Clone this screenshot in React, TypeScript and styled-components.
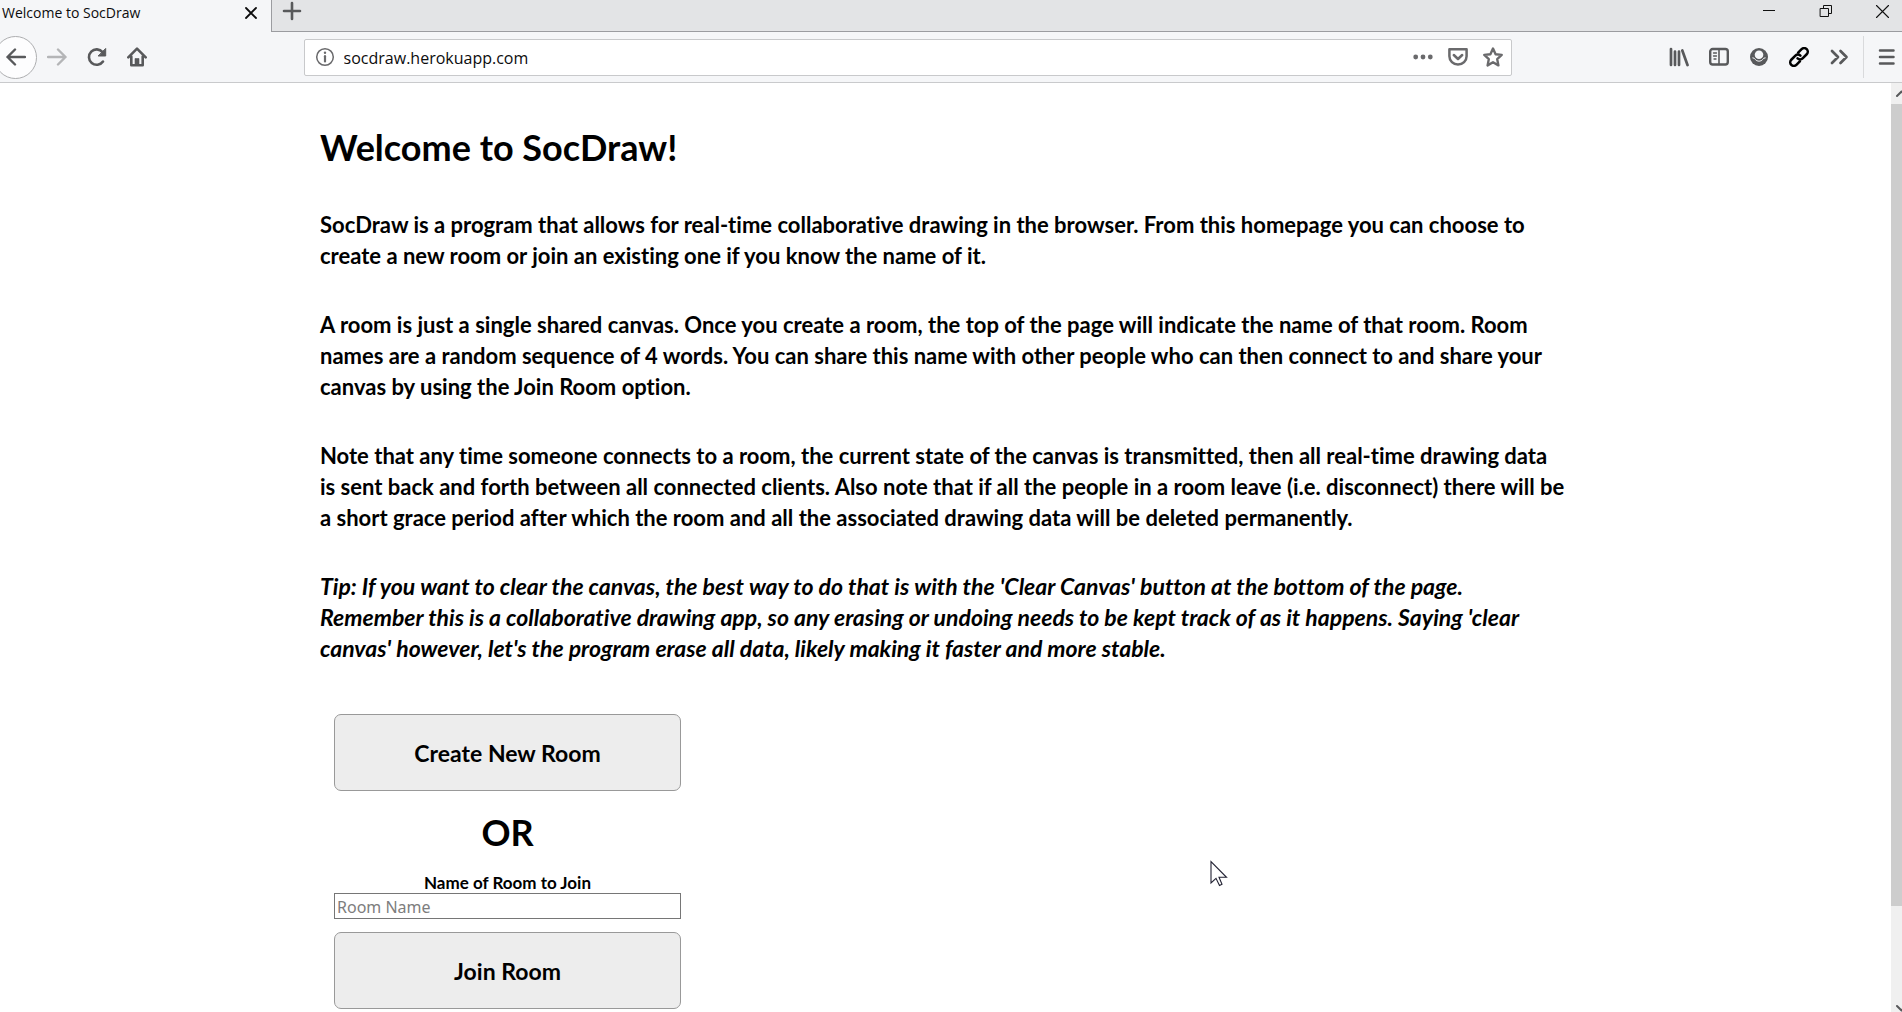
import React from "react";
import styled, { createGlobalStyle } from "styled-components";

const GlobalStyle = createGlobalStyle`
  *, *::before, *::after { box-sizing: border-box; }
  body { margin: 0; background: #fff; color: #000; overflow: hidden; }
`;

const uiFont = `"Open Sans", "Noto Sans", sans-serif`;
const pageFont = `Lato, sans-serif`;

const Window = styled.div`
  display: flex;
  flex-direction: column;
  height: 100vh;
  overflow: hidden;
`;

const TabStrip = styled.header`
  display: flex;
  flex: none;
  height: 32px;
  background: #e3e4e6;
`;

const Tab = styled.div`
  display: flex;
  align-items: center;
  justify-content: space-between;
  width: 271px;
  padding: 0 12px 6px 2px;
  background: #f5f6f8;
  font: 14px/20px ${uiFont};
  color: #0c0c0d;
`;

const StripRest = styled.div`
  display: flex;
  flex: 1;
  justify-content: space-between;
  padding: 0 10px;
  border-left: 1px solid #9b9ca0;
  border-bottom: 1px solid #9b9ca0;
`;

const IconButton = styled.button<{ $w?: number; $h?: number }>`
  display: flex;
  flex: none;
  align-items: center;
  justify-content: center;
  width: ${(p) => p.$w ?? 20}px;
  height: ${(p) => p.$h ?? 22}px;
  padding: 0;
  border: 0;
  background: none;
  color: #58595b;

  svg {
    flex: none;
    display: block;
  }
`;

const WindowControls = styled.div`
  display: flex;
  gap: 36px;
  color: #111;
`;

const Toolbar = styled.nav`
  display: flex;
  flex: none;
  align-items: center;
  height: 51px;
  background: #f5f6f8;
  border-bottom: 1px solid #c9cacc;
`;

const NavGroup = styled.div`
  display: flex;
  align-items: center;
  width: 155px;
  gap: 20px;
`;

const BackButton = styled(IconButton)`
  width: 43px;
  height: 43px;
  margin: 0 -10px 0 -6px;
  border: 1px solid #adaeb0;
  border-radius: 50%;
  background: #fdfdfe;
`;

const Spacer = styled.div`
  flex: 1;
`;

const AddressBar = styled.div`
  display: flex;
  flex: 8;
  align-items: center;
  height: 37px;
  padding: 0 8px 0 10px;
  border: 1px solid #c8c9cb;
  border-radius: 2px;
  background: #fff;
`;

const AddressInput = styled.input`
  flex: 1;
  min-width: 0;
  margin-left: 7px;
  padding: 2px 2px 0;
  border: 0;
  outline: 0;
  background: none;
  color: #0c0c0d;
  font: 16px/24px ${uiFont};
`;

const AddressActions = styled.div`
  display: flex;
  gap: 15px;
`;

const ToolGroup = styled.div`
  display: flex;
  align-items: center;
  gap: 20px;
  width: 202px;
  padding-left: 8px;
`;

const MenuGroup = styled.div`
  display: flex;
  align-items: center;
  justify-content: center;
  width: 39px;
  height: 42px;
  padding-left: 8px;
  border-left: 1px solid #d9dadc;
`;

const Viewport = styled.div`
  display: flex;
  flex: 1;
  min-height: 0;
`;

const Page = styled.main`
  flex: 1;
  min-width: 0;
  padding: 38px 320px 0;
  overflow: hidden;
  font-family: ${pageFont};
  font-weight: 700;
  font-variant-ligatures: none;
`;

const Title = styled.h1`
  margin: 0 0 36px;
  font-size: 36px;
  line-height: 52px;
`;

const Paragraph = styled.p<{ $tip?: boolean }>`
  margin: 0 0 38px;
  font-size: ${(p) => (p.$tip ? 23 : 22)}px;
  line-height: 31px;
  font-style: ${(p) => (p.$tip ? "italic" : "normal")};
  white-space: nowrap;
`;

const RoomForm = styled.form`
  display: flex;
  flex-direction: column;
  width: 347px;
  margin: 50px 14px 0;
`;

const RoomButton = styled.button`
  height: 77px;
  padding: 0;
  border: 1px solid #999;
  border-radius: 7px;
  background: #ededed;
  color: #000;
  font: 700 23px/36px ${pageFont};
`;

const Or = styled.p`
  margin: 15px 0;
  font-size: 36px;
  line-height: 52px;
  text-align: center;
`;

const RoomLabel = styled.label`
  font-size: 17px;
  line-height: 20px;
  text-align: center;
`;

const RoomInput = styled.input`
  height: 26px;
  margin-bottom: 13px;
  padding: 2px 2px 0;
  border: 1px solid #767676;
  border-radius: 0;
  color: #000;
  font: 16px/22px "Noto Sans", sans-serif;

  &::placeholder {
    color: #7d7d7d;
    opacity: 1;
  }
`;

const ScrollBar = styled.div`
  display: flex;
  flex: none;
  flex-direction: column;
  width: 11px;
  overflow: hidden;
  background: #f0f0f0;
`;

const ScrollArrow = styled(IconButton)`
  width: 21px;
  height: 21px;
`;

const ScrollThumb = styled.div`
  flex: 802;
  background: #cdcdcd;
`;

const ScrollTrack = styled.div`
  flex: 85;
`;

const Pointer = styled.svg`
  position: absolute;
  left: 1210px;
  top: 860px;
`;

type IconProps = { size?: number; color?: string; width?: number; children: React.ReactNode };

const Icon = ({ size = 20, color = "currentColor", width = 2.4, children }: IconProps) => (
  <svg
    width={size}
    height={size}
    viewBox={`0 0 ${size} ${size}`}
    fill="none"
    stroke={color}
    strokeWidth={width}
    strokeLinecap="round"
    strokeLinejoin="round"
    aria-hidden="true"
  >
    {children}
  </svg>
);

export default function App() {
  return (
    <>
      <GlobalStyle />
      <Window>
        <TabStrip>
          <Tab>
            <span>Welcome to SocDraw</span>
            <IconButton aria-label="Close tab" $w={16}>
              <Icon size={16} color="#0c0c0d" width={1.8}>
                <path d="M3 3l10 10M13 3L3 13" />
              </Icon>
            </IconButton>
          </Tab>
          <StripRest>
            <IconButton aria-label="New tab">
              <Icon width={2.6}>
                <path d="M10 2v16M2 10h16" />
              </Icon>
            </IconButton>
            <WindowControls>
              <IconButton aria-label="Minimize">
                <Icon width={1} color="#111">
                  <path d="M3.500 9.500h11" strokeLinecap="square" />
                </Icon>
              </IconButton>
              <IconButton aria-label="Restore">
                <Icon width={1} color="#111">
                  <path d="M4.500 7.500h8v8h-8zM7.500 7.500v-3h8v8h-3" strokeLinejoin="miter" />
                </Icon>
              </IconButton>
              <IconButton aria-label="Close">
                <Icon width={1.1} color="#111">
                  <path d="M4.500 4.500l12 12M16.500 4.500L4.500 16.500" />
                </Icon>
              </IconButton>
            </WindowControls>
          </StripRest>
        </TabStrip>

        <Toolbar>
          <NavGroup>
            <BackButton aria-label="Back">
              <Icon>
                <path d="M19 10H1.500M9 2.500L1.500 10L9 17.500" />
              </Icon>
            </BackButton>
            <IconButton aria-label="Forward">
              <Icon color="#b4b5b7">
                <path d="M1 10h17.500M11 2.500L18.500 10L11 17.500" />
              </Icon>
            </IconButton>
            <IconButton aria-label="Reload">
              <Icon width={2.6}>
                <path d="M16 14.500A7.700 7.700 0 1 1 15.600 5.200" />
                <path d="M18.700 1.800v7.200h-7.200z" fill="currentColor" strokeWidth="1" />
              </Icon>
            </IconButton>
            <IconButton aria-label="Home">
              <Icon width={2.6}>
                <path d="M1.300 10.300L10 1.600L18.700 10.300" />
                <path d="M4.300 9.500v8.700h11.400V9.500" />
                <path d="M8 18v-6.500h4V18z" fill="currentColor" strokeWidth="0.600" />
              </Icon>
            </IconButton>
          </NavGroup>
          <Spacer />
          <AddressBar>
            <IconButton aria-label="Site information">
              <Icon width={1.5} color="#6a6a6c">
                <circle cx="10" cy="10" r="8.300" />
                <path d="M10 9.200v5.200" strokeWidth="2.200" />
                <path d="M10 5.700v.1" strokeWidth="2.400" />
              </Icon>
            </IconButton>
            <AddressInput aria-label="Address" defaultValue="socdraw.herokuapp.com" />
            <AddressActions>
              <IconButton aria-label="Page actions">
                <Icon>
                  <g fill="#6a6a6c" stroke="none">
                    <circle cx="2.700" cy="10" r="2.400" />
                    <circle cx="10" cy="10" r="2.400" />
                    <circle cx="17.300" cy="10" r="2.400" />
                  </g>
                </Icon>
              </IconButton>
              <IconButton aria-label="Save to Pocket">
                <Icon color="#6a6a6c" width={2.5}>
                  <path d="M1.400 2.200h17.200v7a8.600 8.300 0 0 1-17.200 0z" />
                  <path d="M5.800 8L10 12L14.200 8" />
                </Icon>
              </IconButton>
              <IconButton aria-label="Bookmark">
                <Icon color="#6a6a6c" width={2.4}>
                  <path d="M10 1.500l2.600 5.700 6.100.7-4.500 4.200 1.200 6.300L10 15.300l-5.400 3.100 1.200-6.300L1.300 7.900l6.100-.7z" />
                </Icon>
              </IconButton>
            </AddressActions>
          </AddressBar>
          <Spacer />
          <ToolGroup>
            <IconButton aria-label="Library">
              <Icon width={2.7}>
                <path d="M2 2v16M6 4.500V18M10 4.500V18M13.300 3.500L18.500 18" />
              </Icon>
            </IconButton>
            <IconButton aria-label="Sidebar">
              <Icon width={2.4}>
                <rect x="1.200" y="2" width="17.600" height="15.500" rx="2.500" />
                <path d="M10 2.500v15" strokeWidth="1.600" />
                <path d="M4.500 6h3M4.500 9h3M5 12h2" strokeWidth="1.300" />
              </Icon>
            </IconButton>
            <IconButton aria-label="Account">
              <Icon>
                <circle cx="10" cy="10" r="9" fill="currentColor" stroke="none" />
                <circle cx="10" cy="7.800" r="4.300" fill="#f5f6f8" stroke="none" />
                <path d="M3.800 10.800Q5.500 10.800 6.300 12.500Q7.500 14.200 10 14.200T13.700 12.500Q14.500 10.800 16.200 10.800" stroke="#f5f6f8" strokeWidth="1" />
              </Icon>
            </IconButton>
            <IconButton aria-label="Copy link">
              <Icon color="#000" width={2.5}>
                <g transform="rotate(-45 10 10)">
                  <path d="M7.500 13.700H2.600a3.600 3.600 0 0 1 0-7.200H8.400A3.600 3.600 0 0 1 12 10" />
                  <path d="M12.500 6.300H17.400a3.600 3.600 0 0 1 0 7.200H11.600A3.600 3.600 0 0 1 8 10" />
                </g>
              </Icon>
            </IconButton>
            <IconButton aria-label="More tools">
              <Icon width={2.7}>
                <path d="M3 4l6 6-6 6M11.500 4l6 6-6 6" />
              </Icon>
            </IconButton>
          </ToolGroup>
          <MenuGroup>
            <IconButton aria-label="Open menu">
              <Icon width={2.5}>
                <path d="M3 3.500h13.500M3 10h13.500M3 16.500h13.500" />
              </Icon>
            </IconButton>
          </MenuGroup>
        </Toolbar>

        <Viewport>
          <Page>
            <Title>Welcome to SocDraw!</Title>
            <Paragraph>
              SocDraw is a program that allows for real-time collaborative drawing in the browser. From this homepage you can choose to
              <br />
              create a new room or join an existing one if you know the name of it.
            </Paragraph>
            <Paragraph>
              A room is just a single shared canvas. Once you create a room, the top of the page will indicate the name of that room. Room
              <br />
              names are a random sequence of 4 words. You can share this name with other people who can then connect to and share your
              <br />
              canvas by using the Join Room option.
            </Paragraph>
            <Paragraph>
              Note that any time someone connects to a room, the current state of the canvas is transmitted, then all real-time drawing data
              <br />
              is sent back and forth between all connected clients. Also note that if all the people in a room leave (i.e. disconnect) there will be
              <br />
              a short grace period after which the room and all the associated drawing data will be deleted permanently.
            </Paragraph>
            <Paragraph $tip>
              Tip: If you want to clear the canvas, the best way to do that is with the 'Clear Canvas' button at the bottom of the page.
              <br />
              Remember this is a collaborative drawing app, so any erasing or undoing needs to be kept track of as it happens. Saying 'clear
              <br />
              canvas' however, let's the program erase all data, likely making it faster and more stable.
            </Paragraph>
            <RoomForm onSubmit={(e) => e.preventDefault()}>
              <RoomButton type="button">Create New Room</RoomButton>
              <Or>OR</Or>
              <RoomLabel htmlFor="room">Name of Room to Join</RoomLabel>
              <RoomInput id="room" placeholder="Room Name" />
              <RoomButton type="submit">Join Room</RoomButton>
            </RoomForm>
          </Page>
          <ScrollBar>
            <ScrollArrow aria-label="Scroll up">
              <Icon width={2}>
                <path d="M5 12l4.500-4.500L14 12" />
              </Icon>
            </ScrollArrow>
            <ScrollThumb />
            <ScrollTrack />
            <ScrollArrow aria-label="Scroll down">
              <Icon width={2}>
                <path d="M5 14l4.500 4.500L14 14" />
              </Icon>
            </ScrollArrow>
          </ScrollBar>
        </Viewport>
      </Window>
      <Pointer width="18" height="28" viewBox="0 0 18 28" aria-hidden="true">
        <path d="M1 1.500V23L6 18.300L9.500 25.500L12 24.300L9 17.300H16.500z" fill="#fff" stroke="#223" strokeWidth="1.100" />
      </Pointer>
    </>
  );
}
